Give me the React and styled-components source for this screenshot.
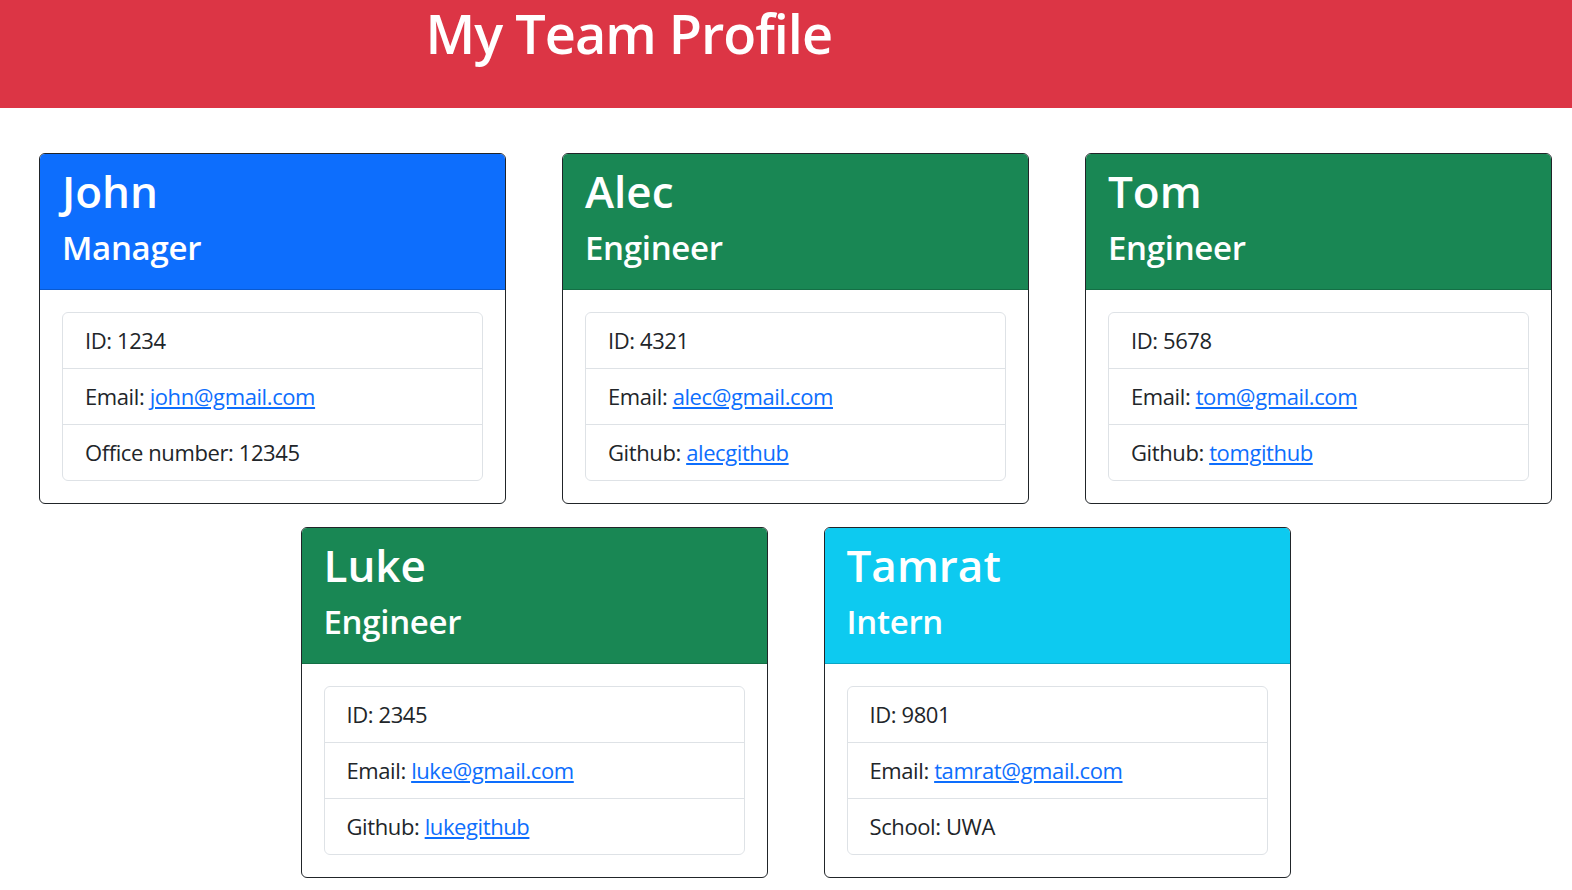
import styled, { createGlobalStyle } from "styled-components";

const GlobalStyle = createGlobalStyle`
  body {
    margin: 0;
    font-family: "Open Sans", "Noto Sans", sans-serif;
    color: #212529;
    background: #fff;
  }
  * { box-sizing: border-box; }
`;

const roleColors = {
  Manager: "#0d6efd",
  Engineer: "#198754",
  Intern: "#0dcaf0",
};

const team = [
  { name: "John", role: "Manager", id: 1234, email: "john@gmail.com", extra: { label: "Office number", value: "12345" } },
  { name: "Alec", role: "Engineer", id: 4321, email: "alec@gmail.com", extra: { label: "Github", value: "alecgithub", link: true } },
  { name: "Tom", role: "Engineer", id: 5678, email: "tom@gmail.com", extra: { label: "Github", value: "tomgithub", link: true } },
  { name: "Luke", role: "Engineer", id: 2345, email: "luke@gmail.com", extra: { label: "Github", value: "lukegithub", link: true } },
  { name: "Tamrat", role: "Intern", id: 9801, email: "tamrat@gmail.com", extra: { label: "School", value: "UWA" } },
];

const App = () => {
  return (
    <>
      <GlobalStyle />
      <Header>
        <HeaderInner>
          <Title>My Team Profile</Title>
        </HeaderInner>
      </Header>
      <Cards>
        {team.map(member => (
          <Card key={member.id}>
            <CardHeader $color={roleColors[member.role]}>
              <Name>{member.name}</Name>
              <Role>{member.role}</Role>
            </CardHeader>
            <CardBody>
              <List>
                <Item>ID: {member.id}</Item>
                <Item>Email: <Link href={`mailto:${member.email}`}>{member.email}</Link></Item>
                <Item>
                  {member.extra.label}:{" "}
                  {member.extra.link
                    ? <Link href="#">{member.extra.value}</Link>
                    : member.extra.value}
                </Item>
              </List>
            </CardBody>
          </Card>
        ))}
      </Cards>
    </>
  );
};

export default App;

const Header = styled.header`
  background-color: #dc3545;
  height: 108px;
`

const HeaderInner = styled.div`
  width: 80%;
  text-align: center;
`

const Title = styled.h1`
  margin: 0;
  color: #fff;
  font-size: 54px;
  font-weight: 600;
  letter-spacing: -1px;
  line-height: 66px;
`

const Cards = styled.main`
  display: flex;
  flex-wrap: wrap;
  justify-content: center;
  column-gap: 56px;
  row-gap: 23px;
  padding: 45px 0 0 19px;
`

const Card = styled.section`
  width: 467px;
  background: #fff;
  border: 1px solid #212529;
  border-radius: 6px;
  overflow: hidden;
`

const CardHeader = styled.div`
  background-color: ${({ $color }) => $color};
  color: #fff;
  padding: 11px 22px;
  border-bottom: 1px solid rgba(0, 0, 0, 0.175);
`

const Name = styled.h1`
  margin: 0 0 11px;
  font-size: 44px;
  font-weight: 600;
  line-height: 52px;
`

const Role = styled.h4`
  margin: 0 0 11px;
  font-size: 33px;
  font-weight: 600;
  letter-spacing: -0.3px;
  line-height: 39px;
`

const CardBody = styled.div`
  padding: 22px;
`

const List = styled.ul`
  list-style: none;
  margin: 0;
  padding: 0;
  border: 1px solid #dee2e6;
  border-radius: 6px;
`

const Item = styled.li`
  padding: 11px 22px;
  font-size: 22px;
  letter-spacing: -0.4px;
  line-height: 33px;

  & + & {
    border-top: 1px solid #dee2e6;
  }
`

const Link = styled.a`
  color: #0d6efd;
  text-decoration: underline;
`
